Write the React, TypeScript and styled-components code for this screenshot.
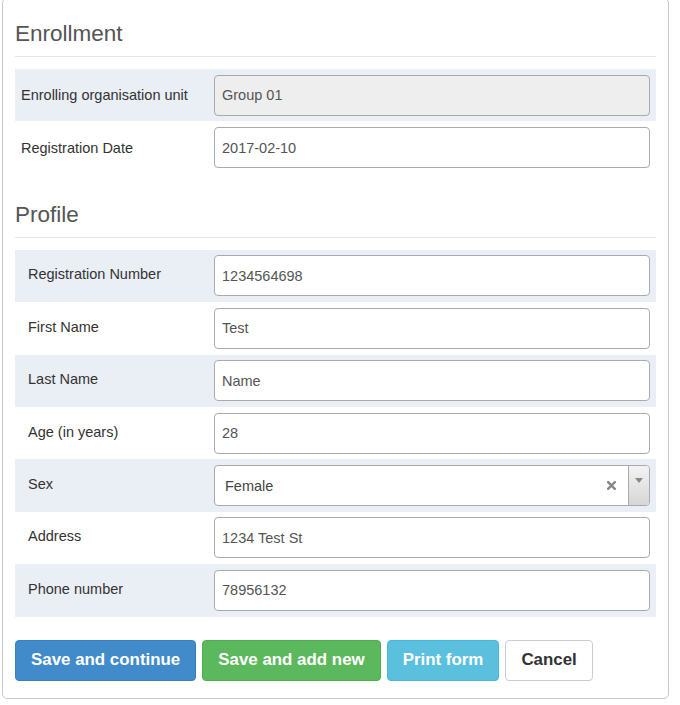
import React from "react";
import styled, { createGlobalStyle } from "styled-components";

const Global = createGlobalStyle`
  html, body { margin: 0; padding: 0; background: #fff; }
  body { font-family: "Liberation Sans", Arial, sans-serif; color: #333; }
  * { box-sizing: border-box; }
`;

const Page = styled.div`
  padding: 0 11px 0 2px;
`;

const Panel = styled.div`
  margin-top: -2px;
  border: 1px solid #c8c8c8;
  border-radius: 5px;
  padding: 0 12px 17px 12px;
  background: #fff;
`;

const Section = styled.section<{ $first?: boolean }>`
  margin-top: ${(p) => (p.$first ? "22px" : "28px")};
`;

const Heading = styled.h3`
  margin: 0 0 12px 0;
  font-size: 22.5px;
  line-height: 25px;
  font-weight: 400;
  color: #555;
  padding-bottom: 10px;
  border-bottom: 1px solid #e5e5e5;
`;

const Row = styled.div<{ $shaded: boolean }>`
  display: grid;
  grid-template-columns: 199px 1fr;
  align-items: center;
  height: 52.4px;
  padding: 0 6px 0 0;
  background: ${(p) => (p.$shaded ? "#eaeef5" : "#fff")};
`;

const Label = styled.div<{ $indent: number; $raise: number }>`
  padding-left: ${(p) => p.$indent}px;
  padding-bottom: ${(p) => p.$raise}px;
  font-size: 14.5px;
  color: #333;
`;

const Input = styled.div<{ $disabled?: boolean }>`
  height: 41px;
  display: flex;
  align-items: center;
  padding: 0 7px;
  border: 1px solid #aaa;
  border-radius: 4px;
  background: ${(p) => (p.$disabled ? "#eee" : "#fff")};
  font-size: 14.5px;
  color: #555;
`;

const Select = styled.div`
  height: 41px;
  display: flex;
  align-items: stretch;
  border: 1px solid #aaa;
  border-radius: 4px;
  background: #fff;
  overflow: hidden;
`;

const SelectValue = styled.div`
  flex: 1;
  display: flex;
  align-items: center;
  padding-left: 10px;
  font-size: 14.5px;
  color: #444;
`;

const Clear = styled.div`
  width: 34px;
  display: flex;
  align-items: center;
  justify-content: center;
`;

const Arrow = styled.div`
  width: 21px;
  border-left: 1px solid #aaa;
  background: linear-gradient(to bottom, #f3f3f3 0%, #d6d6d6 100%);
  display: flex;
  justify-content: center;
  padding-top: 12px;
`;

const Buttons = styled.div`
  display: flex;
  gap: 6px;
  margin-top: 23px;
`;

const variants = {
  primary: { bg: "#428bca", border: "#3a80bd", color: "#fff" },
  success: { bg: "#5cb85c", border: "#4cae4c", color: "#fff" },
  info: { bg: "#5bc0de", border: "#46b8da", color: "#fff" },
  plain: { bg: "#fff", border: "#ccc", color: "#333" },
};

const Button = styled.button<{ $v: keyof typeof variants }>`
  height: 41px;
  padding: 0 15px;
  font-family: "Liberation Sans", Arial, sans-serif;
  font-size: 16.9px;
  font-weight: bold;
  border-radius: 4px;
  border: 1px solid ${(p) => variants[p.$v].border};
  background: ${(p) => variants[p.$v].bg};
  color: ${(p) => variants[p.$v].color};
  cursor: pointer;
`;

type Field = { label: string; value: string; disabled?: boolean; select?: boolean };

const enrollment: Field[] = [
  { label: "Enrolling organisation unit", value: "Group 01", disabled: true },
  { label: "Registration Date", value: "2017-02-10" },
];

const profile: Field[] = [
  { label: "Registration Number", value: "1234564698" },
  { label: "First Name", value: "Test" },
  { label: "Last Name", value: "Name" },
  { label: "Age (in years)", value: "28" },
  { label: "Sex", value: "Female", select: true },
  { label: "Address", value: "1234 Test St" },
  { label: "Phone number", value: "78956132" },
];

const FieldRow = ({ f, i, indent, raise }: { f: Field; i: number; indent: number; raise: number }) => (
  <Row $shaded={i % 2 === 0}>
    <Label $indent={indent} $raise={raise}>{f.label}</Label>
    {f.select ? (
      <Select>
        <SelectValue>{f.value}</SelectValue>
        <Clear>
          <svg width="9" height="9" viewBox="0 0 9 9">
            <path d="M1.2 1.2 L7.8 7.8 M7.8 1.2 L1.2 7.8" stroke="#888" strokeWidth="2.4" strokeLinecap="square" />
          </svg>
        </Clear>
        <Arrow>
          <svg width="8" height="5" viewBox="0 0 8 5">
            <path d="M0 0 L8 0 L4 5 Z" fill="#888" />
          </svg>
        </Arrow>
      </Select>
    ) : (
      <Input $disabled={f.disabled}>{f.value}</Input>
    )}
  </Row>
);

export default function App() {
  return (
    <Page>
      <Global />
      <Panel>
        <Section $first>
          <Heading>Enrollment</Heading>
          {enrollment.map((f, i) => (
            <FieldRow key={f.label} f={f} i={i} indent={6} raise={0} />
          ))}
        </Section>
        <Section>
          <Heading>Profile</Heading>
          {profile.map((f, i) => (
            <FieldRow key={f.label} f={f} i={i} indent={13} raise={3} />
          ))}
        </Section>
        <Buttons>
          <Button $v="primary">Save and continue</Button>
          <Button $v="success">Save and add new</Button>
          <Button $v="info">Print form</Button>
          <Button $v="plain">Cancel</Button>
        </Buttons>
      </Panel>
    </Page>
  );
}
